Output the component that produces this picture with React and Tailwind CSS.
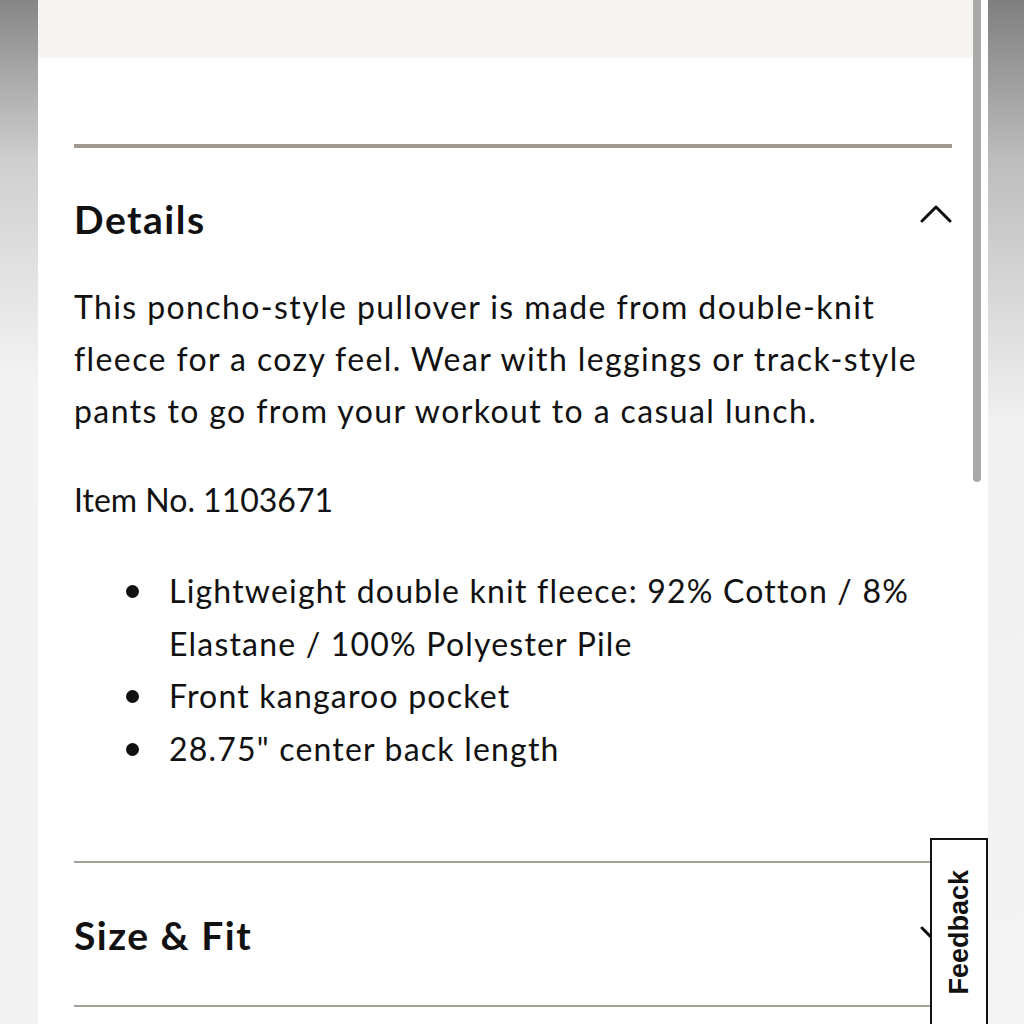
import React from 'react';

const Chevron = ({ up }) => (
  <svg width="32" height="20" viewBox="0 0 32 20" fill="none" className="shrink-0">
    <polyline
      points={up ? '2,18 16,4 30,18' : '2,3 16,17 30,3'}
      stroke="#111"
      strokeWidth="3"
      strokeLinecap="round"
      strokeLinejoin="round"
    />
  </svg>
);

const bullets = [
  'Lightweight double knit fleece: 92% Cotton / 8% Elastane / 100% Polyester Pile',
  'Front kangaroo pocket',
  '28.75" center back length',
];

export default function App() {
  return (
    <div
      className="relative flex w-[1024px] h-[1024px] overflow-hidden bg-white text-[#111]"
      style={{ fontFamily: 'Lato, "Noto Sans", sans-serif' }}
    >
      {/* left blurred edge */}
      <div className="w-[38px] shrink-0 bg-[linear-gradient(to_bottom,#868686_0px,#cfcfcf_160px,#f3f3f3_380px,#f2f2f2_1024px)]" />

      {/* main panel */}
      <div className="relative flex-1 bg-white">
        <div className="h-[58px] w-[935px] bg-[#f7f5f2]" />

        <div className="px-[36px]">
          <div className="mt-[86px] h-[4px] bg-[#a1998f]" />

          <div className="mt-[51px] flex items-center justify-between h-[40px]">
            <h2 className="text-[39px] font-bold leading-[40px] tracking-[1.5px]">Details</h2>
            <div className="-mt-[12px]">
              <Chevron up />
            </div>
          </div>

          <p className="mt-[42px] text-[32px] leading-[52px] tracking-[1.4px]">
            This poncho-style pullover is made from double-knit fleece for a cozy feel. Wear with leggings or
            track-style pants to go from your workout to a casual lunch.
          </p>

          <p className="mt-[37px] text-[32px] leading-[52px]">Item No. 1103671</p>

          <ul className="mt-[39px] text-[32px] leading-[52.5px] tracking-[1.2px]">
            {bullets.map((b, i) => (
              <li key={i} className="flex">
                <span className="w-[95px] shrink-0 flex justify-end pr-[30px] pt-[20px]">
                  <span className="w-[13px] h-[13px] rounded-full bg-[#111]" />
                </span>
                <span>{b}</span>
              </li>
            ))}
          </ul>

          <div className="mt-[86px] h-[2px] bg-[#a3a097]" />

          <div className="mt-[52px] flex items-center justify-between h-[40px]">
            <h2 className="text-[39px] font-bold leading-[40px] tracking-[1.5px]">Size &amp; Fit</h2>
            <Chevron />
          </div>

          <div className="mt-[50px] h-[2px] bg-[#a3a097]" />
        </div>

        {/* scrollbar */}
        <div className="absolute left-[935px] top-0 w-[8px] h-[482px] rounded-b-full bg-[#a9a9a9]" />
      </div>

      {/* right blurred edge */}
      <div className="w-[36px] shrink-0 bg-[linear-gradient(to_bottom,#7f7f7f_0px,#bdbdbd_160px,#f0f0f0_420px,#f4f4f4_1024px)]" />

      {/* feedback tab */}
      <div className="absolute left-[930px] top-[838px] w-[58px] h-[200px] bg-white border-2 border-[#111] flex items-start justify-center">
        <span
          className="mt-[30px] block text-[27px] font-bold leading-none text-[#111] [writing-mode:vertical-rl] rotate-180"
          style={{ fontFamily: '"Liberation Sans", Arial, sans-serif' }}
        >
          Feedback
        </span>
      </div>
    </div>
  );
}
